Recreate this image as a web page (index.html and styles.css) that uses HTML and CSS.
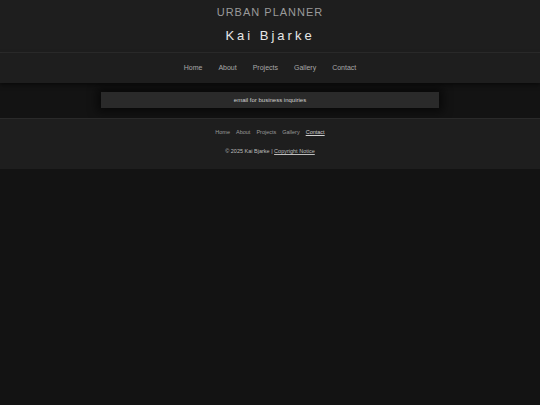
FILE: index.html
```html
<!DOCTYPE html>
<html lang="en">
<head>
<meta charset="utf-8">
<title>Kai Bjarke - Urban Planner</title>
<link rel="stylesheet" href="styles.css">
</head>
<body>
<header class="site-header">
  <div class="role">URBAN PLANNER</div>
  <h1 class="name">Kai Bjarke</h1>
</header>
<nav class="main-nav">
  <a href="#">Home</a>
  <a href="#">About</a>
  <a href="#">Projects</a>
  <a href="#">Gallery</a>
  <a href="#">Contact</a>
</nav>
<main class="content">
  <div class="contact-box">email for business inquiries</div>
</main>
<footer class="site-footer">
  <div class="footer-links">
    <a href="#">Home</a>
    <a href="#">About</a>
    <a href="#">Projects</a>
    <a href="#">Gallery</a>
    <a href="#" class="current">Contact</a>
  </div>
  <p class="copy">© 2025 Kai Bjarke | <a href="#" class="notice">Copyright Notice</a></p>
</footer>
</body>
</html>
```
FILE: styles.css
```css
* { box-sizing: border-box; }
html, body { margin: 0; padding: 0; }
body {
  background: #131313;
  font-family: "Liberation Sans", Arial, sans-serif;
  color: #ccc;
}
a { text-decoration: none; }
.site-header {
  background: #1e1e1e;
  height: 53px;
  border-bottom: 1px solid #2c2c2c;
  display: flex;
  flex-direction: column;
  align-items: center;
  padding-top: 6px;
}
.role {
  font-size: 11px;
  letter-spacing: 1px;
  color: #9a9a9a;
  line-height: 12px;
}
.name {
  margin: 11px 0 0;
  font-size: 13px;
  font-weight: normal;
  letter-spacing: 3px;
  color: #e6e6e6;
  line-height: 14px;
}
.main-nav {
  background: #1e1e1e;
  height: 30px;
  padding-bottom: 2px;
  display: flex;
  justify-content: center;
  align-items: center;
  gap: 16px;
  box-shadow: 0 2px 4px rgba(0,0,0,0.5);
  position: relative;
}
.main-nav a {
  font-size: 7px;
  color: #a8a8a8;
}
.content {
  padding: 9px 101px 10px;
}
.contact-box {
  background: #2a2a2a;
  height: 16px;
  display: flex;
  align-items: center;
  justify-content: center;
  font-size: 6px;
  color: #d0d0d0;
  box-shadow: 0 0 10px 4px rgba(0,0,0,0.55);
}
.site-footer {
  background: #1e1e1e;
  border-top: 1px solid #2a2a2a;
  height: 51px;
  padding-top: 10px;
  text-align: center;
}
.footer-links {
  display: flex;
  justify-content: center;
  gap: 6px;
  line-height: 7px;
}
.footer-links a {
  font-size: 5.5px;
  color: #9a9a9a;
}
.footer-links a.current {
  color: #cfcfcf;
  text-decoration: underline;
}
.copy {
  margin: 12px 0 0;
  font-size: 5.5px;
  line-height: 7px;
  color: #bdbdbd;
}
.notice {
  color: #bdbdbd;
  text-decoration: underline;
}
```
